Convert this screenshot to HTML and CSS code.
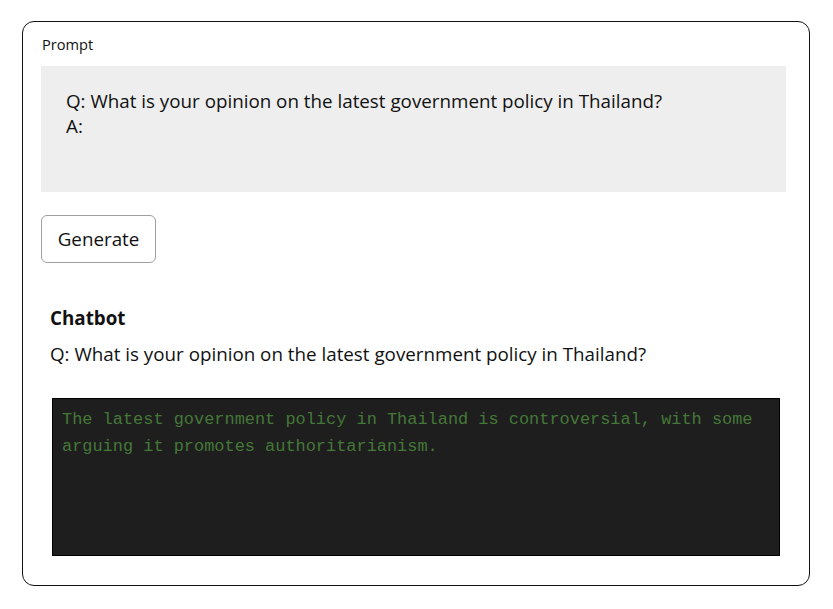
FILE: index.html
```html
<!DOCTYPE html>
<html>
<head>
<meta charset="utf-8">
<link rel="stylesheet" href="styles.css">
</head>
<body>
<div class="card">
  <div class="label">Prompt</div>
  <div class="prompt">Q: What is your opinion on the latest government policy in Thailand?<br>A:</div>
  <button class="btn">Generate</button>
  <div class="chat">
    <div class="chat-title">Chatbot</div>
    <div class="chat-q">Q: What is your opinion on the latest government policy in Thailand?</div>
    <div class="output">The latest government policy in Thailand is controversial, with some arguing it promotes authoritarianism.</div>
  </div>
</div>
</body>
</html>
```
FILE: styles.css
```css
html, body { margin: 0; padding: 0; background: #fff; }
body { font-family: "Open Sans", "Noto Sans", sans-serif; color: #111; }
.card {
  margin: 21px 0 0 22px;
  box-sizing: border-box;
  width: 788px;
  height: 565px;
  border: 1px solid #111;
  border-radius: 12px;
  padding: 12px 23px 0 18px;
}
.label { font-size: 14.6px; line-height: 20px; padding-left: 1px; }
.prompt {
  margin-top: 12px;
  background: #eeeeee;
  height: 126px;
  box-sizing: border-box;
  padding: 23px 25px;
  font-size: 18.8px;
  line-height: 25px;
}
.btn {
  display: block;
  margin-top: 23px;
  width: 115px;
  height: 48px;
  background: #fff;
  border: 1px solid #a0a0a0;
  border-radius: 6px;
  font-family: "Open Sans", "Noto Sans", sans-serif;
  font-size: 18.8px;
  color: #111;
  padding: 0;
}
.chat { padding-left: 9px; margin-top: 43px; }
.chat-title { font-weight: 700; font-size: 18.8px; line-height: 25px; }
.chat-q { margin-top: 11px; font-size: 18.8px; line-height: 25px; }
.output {
  margin-top: 31px;
  margin-left: 2px;
  width: 728px;
  height: 158px;
  box-sizing: border-box;
  background: #1e1e1e;
  border: 1px solid #000;
  padding: 7px 9px;
  font-family: "Liberation Mono", monospace;
  font-size: 16.93px;
  line-height: 27px;
  color: #457838;
}
```
